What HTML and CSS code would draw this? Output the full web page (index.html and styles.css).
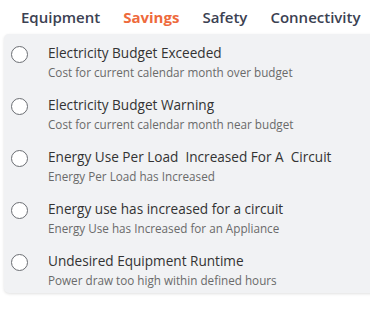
FILE: index.html
```html
<!DOCTYPE html>
<html>
<head>
<meta charset="utf-8">
<link rel="stylesheet" href="styles.css">
</head>
<body>
<div class="page">
  <nav class="tabs">
    <span class="tab">Equipment</span>
    <span class="tab active">Savings</span>
    <span class="tab">Safety</span>
    <span class="tab">Connectivity</span>
  </nav>
  <div class="panel">
    <div class="row">
      <span class="radio"></span>
      <div class="text">
        <div class="title">Electricity Budget Exceeded</div>
        <div class="sub">Cost for current calendar month over budget</div>
      </div>
    </div>
    <div class="row">
      <span class="radio"></span>
      <div class="text">
        <div class="title">Electricity Budget Warning</div>
        <div class="sub">Cost for current calendar month near budget</div>
      </div>
    </div>
    <div class="row">
      <span class="radio"></span>
      <div class="text">
        <div class="title">Energy Use Per Load&nbsp; Increased For A&nbsp; Circuit</div>
        <div class="sub">Energy Per Load has Increased</div>
      </div>
    </div>
    <div class="row">
      <span class="radio"></span>
      <div class="text">
        <div class="title">Energy use has increased for a circuit</div>
        <div class="sub">Energy Use has Increased for an Appliance</div>
      </div>
    </div>
    <div class="row">
      <span class="radio"></span>
      <div class="text">
        <div class="title">Undesired Equipment Runtime</div>
        <div class="sub">Power draw too high within defined hours</div>
      </div>
    </div>
  </div>
</div>
</body>
</html>
```
FILE: styles.css
```css
html, body {
  margin: 0;
  padding: 0;
  background: #ffffff;
  overflow: hidden;
}
body {
  width: 370px;
  height: 313px;
  font-family: "Open Sans", "Liberation Sans", sans-serif;
}
.page {
  padding: 0 0 0 4px;
}
.tabs {
  display: flex;
  gap: 23px;
  padding: 6px 0 0 17px;
  height: 28px;
  box-sizing: border-box;
  white-space: nowrap;
}
.tab {
  font-size: 15px;
  font-weight: 600;
  color: #3b4152;
  line-height: 22px;
}
.tab.active {
  color: #ee6a3c;
  font-weight: 700;
}
.panel {
  margin-top: 6px;
  width: 380px;
  background: #f1f2f4;
  border-radius: 5px;
  box-shadow: 0 1px 3px rgba(0,0,0,0.12);
  padding: 9px 0 7px 0;
  box-sizing: border-box;
  height: 259px;
}
.row {
  display: flex;
  align-items: flex-start;
  height: 52px;
}
.radio {
  width: 15px;
  height: 15px;
  border: 1.5px solid #6b6e73;
  border-radius: 50%;
  background: #ffffff;
  margin: 3px 0 0 7px;
  flex: none;
}
.text {
  margin-left: 20px;
}
.title {
  font-size: 13.6px;
  color: #333333;
  line-height: 20px;
}
.sub {
  font-size: 11.7px;
  color: #6a6a6a;
  line-height: 18px;
}
```
